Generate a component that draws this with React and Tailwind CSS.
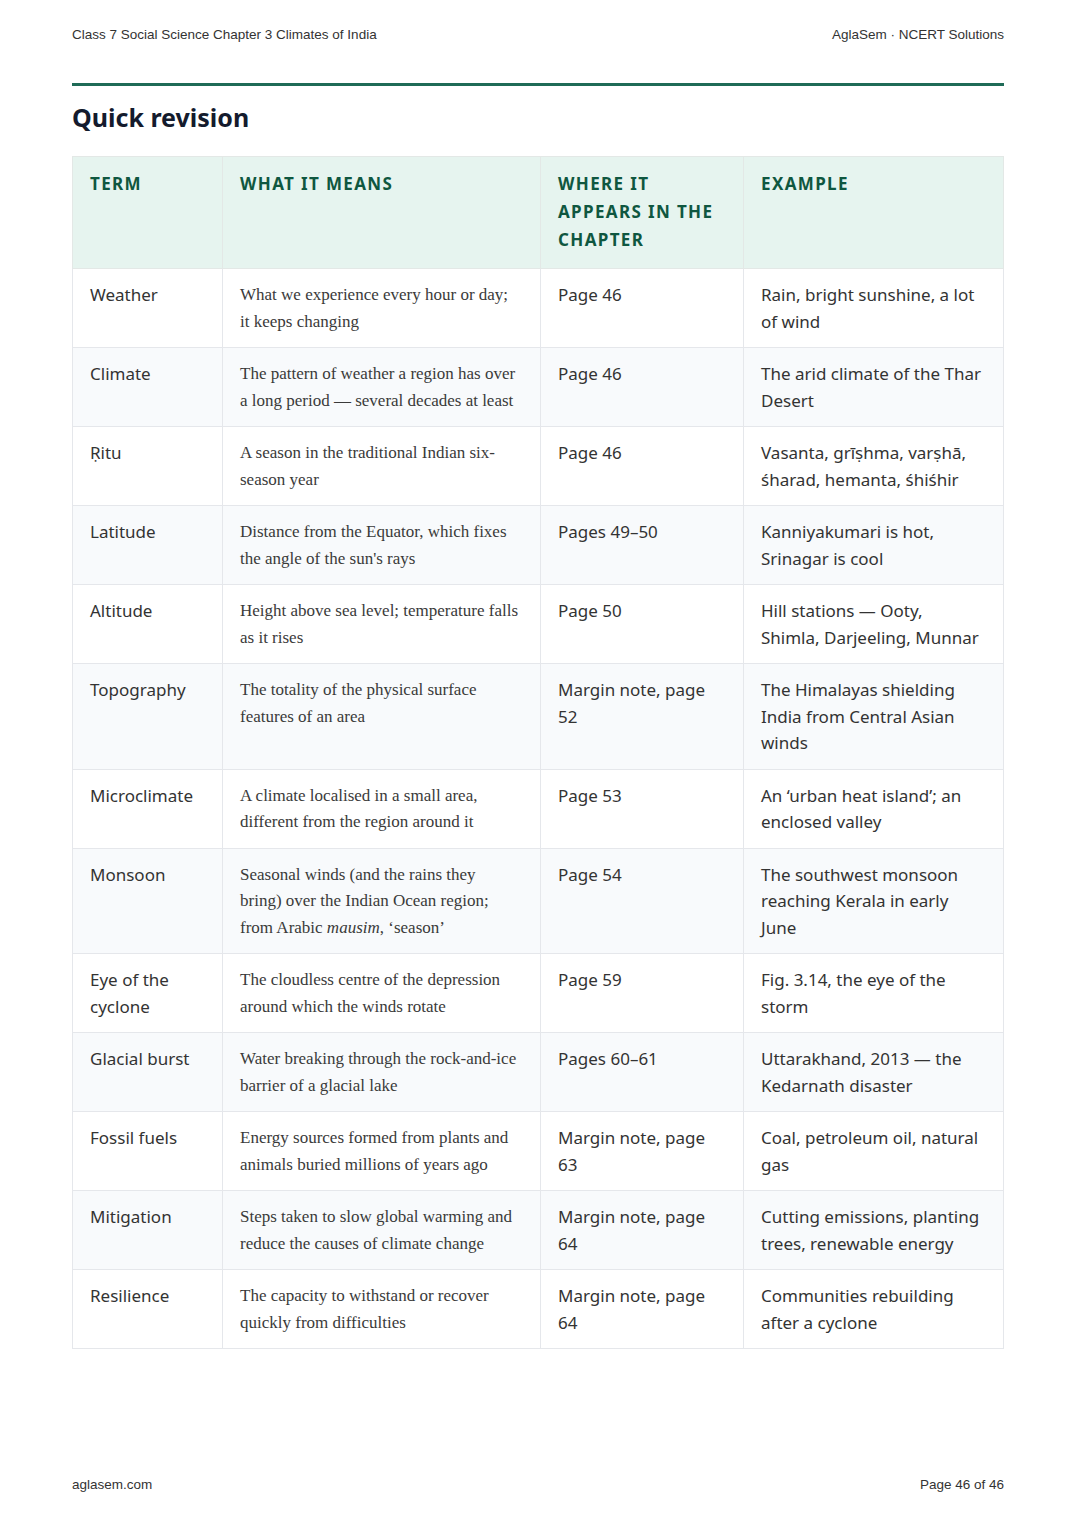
import React from 'react';

const rows = [
    ['Weather', <>What we experience every hour or day;<br />it keeps changing</>, 'Page 46', 'Rain, bright sunshine, a lot of wind'],
    ['Climate', 'The pattern of weather a region has over a long period — several decades at least', 'Page 46', 'The arid climate of the Thar Desert'],
    ['Ṛitu', 'A season in the traditional Indian six-season year', 'Page 46', 'Vasanta, grīṣhma, varṣhā, śharad, hemanta, śhiśhir'],
    ['Latitude', "Distance from the Equator, which fixes the angle of the sun's rays", 'Pages 49–50', 'Kanniyakumari is hot, Srinagar is cool'],
    ['Altitude', 'Height above sea level; temperature falls as it rises', 'Page 50', <>Hill stations — Ooty,<br />Shimla, Darjeeling, Munnar</>],
    ['Topography', 'The totality of the physical surface features of an area', 'Margin note, page 52', 'The Himalayas shielding India from Central Asian winds'],
    ['Microclimate', 'A climate localised in a small area, different from the region around it', 'Page 53', 'An ‘urban heat island’; an enclosed valley'],
    ['Monsoon', <>Seasonal winds (and the rains they<br />bring) over the Indian Ocean region;<br />from Arabic <i>mausim</i>, ‘season’</>, 'Page 54', 'The southwest monsoon reaching Kerala in early June'],
    ['Eye of the cyclone', 'The cloudless centre of the depression around which the winds rotate', 'Page 59', 'Fig. 3.14, the eye of the storm'],
    ['Glacial burst', 'Water breaking through the rock-and-ice barrier of a glacial lake', 'Pages 60–61', 'Uttarakhand, 2013 — the Kedarnath disaster'],
    ['Fossil fuels', 'Energy sources formed from plants and animals buried millions of years ago', 'Margin note, page 63', 'Coal, petroleum oil, natural gas'],
    ['Mitigation', 'Steps taken to slow global warming and reduce the causes of climate change', 'Margin note, page 64', 'Cutting emissions, planting trees, renewable energy'],
    ['Resilience', 'The capacity to withstand or recover quickly from difficulties', 'Margin note, page 64', 'Communities rebuilding after a cyclone'],
];

const App = () => {
    return (
        <div className="min-h-[1522px] flex flex-col bg-white px-[72px] pt-[27px] pb-[29px]">
            {/* running header */}
            <div className="flex justify-between text-[13.5px] leading-[16px] text-[#333] font-['Liberation_Sans',Arial,sans-serif]">
                <span>Class 7 Social Science Chapter 3 Climates of India</span>
                <span>AglaSem · NCERT Solutions</span>
            </div>
            <div className="mt-[40px] h-[3px] bg-[#1f6b57]"></div>

            <h2 className="mt-[15px] text-[25px] leading-[32px] font-bold text-[#141b2d] font-['Noto_Sans',sans-serif]">Quick revision</h2>

            <table className="mt-[23px] w-[931px] table-fixed border-collapse font-['Noto_Sans',sans-serif] text-[17px] text-[#333]">
                <colgroup>
                    <col className="w-[150px]" />
                    <col className="w-[318px]" />
                    <col className="w-[203px]" />
                    <col className="w-[260px]" />
                </colgroup>
                <thead>
                    <tr className="bg-[#e6f4ef]">
                        {['Term', 'What it means', 'Where it appears in the chapter', 'Example'].map((h) => (
                            <th key={h} className="border border-[#e3e8e6] px-[17px] pt-[13px] pb-[14px] text-left align-top uppercase font-bold tracking-[0.08em] leading-[28px] text-[#0f5740]">
                                {h}
                            </th>
                        ))}
                    </tr>
                </thead>
                <tbody>
                    {rows.map((r, i) => (
                        <tr key={i} className={i % 2 === 1 ? 'bg-[#f8fafc]' : 'bg-white'}>
                            <td className="border border-[#e5e7eb] px-[17px] pt-[13px] pb-[12px] align-top leading-[26.5px]">{r[0]}</td>
                            <td className="border border-[#e5e7eb] px-[17px] pt-[13px] pb-[12px] align-top leading-[26.5px] text-[#3a3a3a] font-['Liberation_Serif','Times_New_Roman',serif]">{r[1]}</td>
                            <td className="border border-[#e5e7eb] px-[17px] pt-[13px] pb-[12px] align-top leading-[26.5px]">{r[2]}</td>
                            <td className="border border-[#e5e7eb] px-[17px] pt-[13px] pb-[12px] align-top leading-[26.5px]">{r[3]}</td>
                        </tr>
                    ))}
                </tbody>
            </table>

            {/* running footer */}
            <div className="mt-auto flex justify-between text-[13.5px] leading-[16px] text-[#333] font-['Liberation_Sans',Arial,sans-serif]">
                <span>aglasem.com</span>
                <span>Page 46 of 46</span>
            </div>
        </div>
    );
};

export default App;
